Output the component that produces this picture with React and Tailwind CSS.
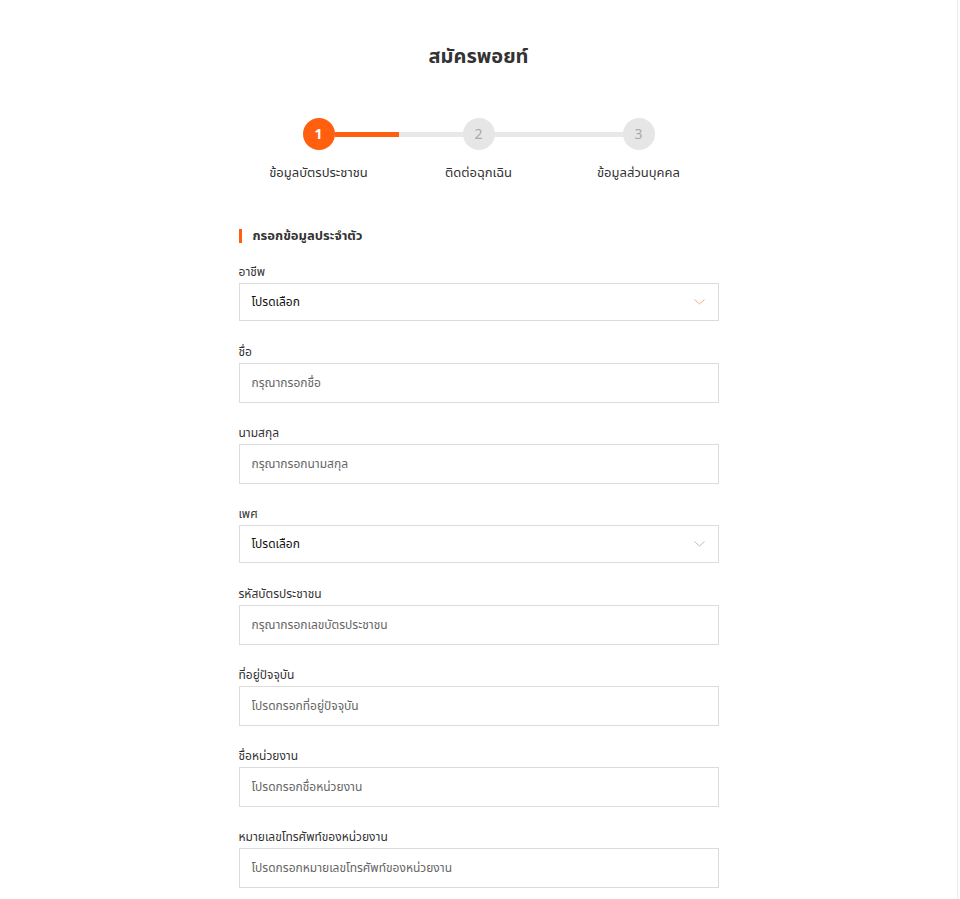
import React, { useState } from 'react';

const steps = [
  { no: 1, label: 'ข้อมูลบัตรประชาชน' },
  { no: 2, label: 'ติดต่อฉุกเฉิน' },
  { no: 3, label: 'ข้อมูลส่วนบุคคล' },
];

const fields = [
  { label: 'อาชีพ', type: 'select', accent: true },
  { label: 'ชื่อ', placeholder: 'กรุณากรอกชื่อ' },
  { label: 'นามสกุล', placeholder: 'กรุณากรอกนามสกุล' },
  { label: 'เพศ', type: 'select' },
  { label: 'รหัสบัตรประชาชน', placeholder: 'กรุณากรอกเลขบัตรประชาชน' },
  { label: 'ที่อยู่ปัจจุบัน', placeholder: 'โปรดกรอกที่อยู่ปัจจุบัน' },
  { label: 'ชื่อหน่วยงาน', placeholder: 'โปรดกรอกชื่อหน่วยงาน' },
  { label: 'หมายเลขโทรศัพท์ของหน่วยงาน', placeholder: 'โปรดกรอกหมายเลขโทรศัพท์ของหน่วยงาน' },
];

const Chevron = ({ accent }) => (
  <svg width="11" height="6" viewBox="0 0 11 6" fill="none">
    <path d="M0.5 0.5L5.5 5L10.5 0.5" stroke={accent ? '#efae88' : '#bdbdbd'} strokeWidth="1" />
  </svg>
);

const Field = ({ field }) => {
  const [value, setValue] = useState('');

  if (field.type === 'select') {
    return (
      <div className="mb-[22px]">
        <label className="block text-[12px] leading-[18px] text-[#333] mb-[2px]">{field.label}</label>
        <div className="h-[38px] border border-[#dcdcdc] bg-white flex items-center justify-between pl-[12px] pr-[13px]">
          <span className="text-[12px] text-[#111]">โปรดเลือก</span>
          <Chevron accent={field.accent} />
        </div>
      </div>
    );
  }

  return (
    <div className="mb-[21px]">
      <label className="block text-[12px] leading-[18px] text-[#333] mb-[2px]">{field.label}</label>
      <input
        type="text"
        value={value}
        onChange={(e) => setValue(e.target.value)}
        placeholder={field.placeholder}
        className="w-full h-[40px] border border-[#dcdcdc] bg-white px-[12px] text-[12px] text-[#333] placeholder:text-[#666] outline-none"
      />
    </div>
  );
};

const App = () => {
  return (
    <div
      className="flex min-h-screen bg-white"
      style={{ fontFamily: 'Tahoma, "Noto Sans Thai", "Liberation Sans", sans-serif' }}
    >
      <div className="w-[958px] border-r border-[#ececec] pb-[10px]">
        <h1 className="pt-[44px] text-center text-[20px] leading-[26px] font-bold text-[#333]">สมัครพอยท์</h1>

        {/* stepper */}
        <div className="mt-[48px] flex justify-center items-center">
          <div className="w-[32px] h-[32px] rounded-full bg-[#ff5f0f] text-white text-[14px] font-bold flex items-center justify-center">1</div>
          <div className="w-[128px] h-[5px] flex">
            <div className="w-[64px] bg-[#ff5f0f]" />
            <div className="w-[64px] bg-[#e8e8e8]" />
          </div>
          <div className="w-[32px] h-[32px] rounded-full bg-[#e6e6e6] text-[#aaa] text-[14px] flex items-center justify-center">2</div>
          <div className="w-[128px] h-[5px] bg-[#e8e8e8]" />
          <div className="w-[32px] h-[32px] rounded-full bg-[#e6e6e6] text-[#aaa] text-[14px] flex items-center justify-center">3</div>
        </div>
        <div className="mt-[14px] flex justify-center">
          {steps.map((s) => (
            <div key={s.no} className="w-[160px] text-center text-[13px] leading-[18px] text-[#333]">{s.label}</div>
          ))}
        </div>

        <div className="w-[480px] mx-auto mt-[45px]">
          <div className="flex items-center mb-[18px]">
            <div className="w-[3px] h-[14px] bg-[#ff5f0f]" />
            <h2 className="ml-[11px] text-[13px] leading-[18px] font-bold text-[#333]">กรอกข้อมูลประจำตัว</h2>
          </div>
          {fields.map((f) => (
            <Field key={f.label} field={f} />
          ))}
        </div>
      </div>
    </div>
  );
};

export default App;
